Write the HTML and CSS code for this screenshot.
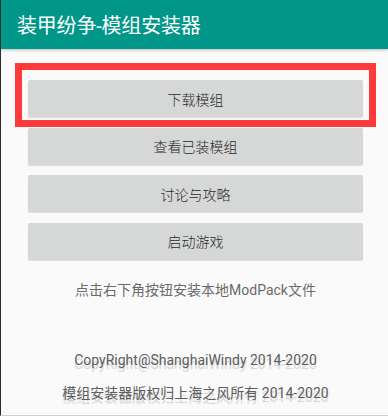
FILE: index.html
```html
<!DOCTYPE html>
<html lang="zh-CN">
<head>
    <meta charset="UTF-8">
    <meta name="viewport" content="width=device-width, initial-scale=1.0">
    <title>装甲纷争-模组安装器</title>
    <link rel="stylesheet" href="styles.css">
</head>
<body>
    <div class="app">
        <div class="toolbar">
            <h1>装甲纷争-模组安装器</h1>
        </div>
        <div class="content">
            <div class="buttons">
                <button class="btn">下载模组</button>
                <button class="btn">查看已装模组</button>
                <button class="btn">讨论与攻略</button>
                <button class="btn">启动游戏</button>
            </div>
            <p class="hint">点击右下角按钮安装本地ModPack文件</p>
            <div class="footer">
                <p>CopyRight@ShanghaiWindy 2014-2020</p>
                <p>模组安装器版权归上海之风所有 2014-2020</p>
            </div>
            <!-- annotation box round the first button -->
            <div class="mark"></div>
        </div>
    </div>
</body>
</html>
```

FILE: styles.css
```css
html, body {
    margin: 0;
    padding: 0;
}
body {
    font-family: Roboto, "Noto Sans CJK SC", sans-serif;
    background-color: #fafafa;
}
.app {
    width: 387px;
    height: 415px;
    border-left: 1px solid #2b2b2b;
    border-bottom: 1px solid #d0d0d0;
    background-color: #fafafa;
    overflow: hidden;
}
.toolbar {
    height: 49px;
    background-color: #009688;
    display: flex;
    align-items: center;
    padding-left: 16px;
    box-shadow: 0 1px 3px rgba(0,0,0,0.25);
    position: relative;
    z-index: 1;
}
.toolbar h1 {
    margin: 0;
    color: #ffffff;
    font-size: 20px;
    font-weight: normal;
    letter-spacing: -0.2px;
}
.content {
    position: relative;
    padding: 31px 25px 0 27px;
}
.buttons {
    display: flex;
    flex-direction: column;
    gap: 10.5px;
}
.btn {
    height: 37px;
    border: none;
    border-radius: 2px;
    background-color: #d6d7d7;
    color: #2a2a2a;
    font-family: Roboto, "Noto Sans CJK SC", sans-serif;
    font-size: 14px;
    font-weight: 300;
    box-shadow: 0 1px 1px rgba(0,0,0,0.12);
    padding: 0;
}
.hint {
    margin: 20px 0 0;
    text-align: center;
    color: #6a6a6a;
    font-size: 14px;
    line-height: 20px;
}
.footer {
    margin-top: 50px;
    text-align: center;
    color: #5e5e5e;
    font-size: 14px;
}
.footer p {
    margin: 0 0 13px;
    line-height: 20px;
    text-shadow: 0 4px 1px rgba(0,0,0,0.16);
}
.mark {
    position: absolute;
    left: 14px;
    top: 14px;
    width: 347px;
    height: 50px;
    border: 7px solid #fe3a3a;
}
```
